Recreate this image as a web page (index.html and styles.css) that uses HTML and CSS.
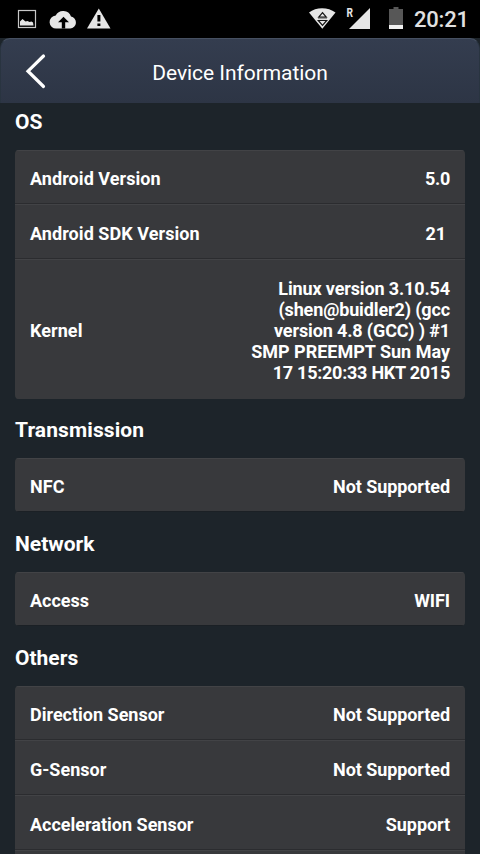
FILE: index.html
```html
<!DOCTYPE html>
<html lang="en">
<head>
<meta charset="utf-8">
<title>Device Information</title>
<link rel="stylesheet" href="styles.css">
</head>
<body>
<div class="status">
  <svg class="status-left" width="120" height="38" viewBox="0 0 120 38">
    <rect x="18.500" y="10.500" width="17" height="17" fill="none" stroke="#c8c8c8" stroke-width="1.200"/>
    <path d="M20 25.500V21.500l2.500-2.500 3 2.500 2-.5 2 1 2-.5 1.500 1 .5 3z" fill="#e6e6e6"/>
    <path d="M56.500 28.500a6.500 6.500 0 0 1-.8-13A8.300 8.300 0 0 1 71 16.600a6 6 0 0 1-.8 11.900z" fill="#e6e6e6"/>
    <path d="M63.500 16.800l5.500 5.400h-3.800v6.300h-3.400v-6.300H58z" fill="#000"/>
    <path d="M98.800 8.500L110.500 28.500H87z" fill="#e6e6e6"/>
    <path d="M97.400 15h3v6.500h-3zM97.400 23.500h3v2.500h-3z" fill="#000"/>
  </svg>
  <svg class="status-right" width="104" height="38" viewBox="0 0 104 38">
    <path d="M9 12.500C16 6.800 28 6.800 35.500 12.500L22.300 28.800z" fill="#e6e6e6"/>
    <path d="M22.500 12.600l3.800 4.600h-7.600z" fill="#e6e6e6" stroke="#111" stroke-width="1.200"/>
    <path d="M18 18.500h9" stroke="#999" stroke-width="1.200"/>
    <path d="M18.300 20.500h8.400l-4.200 4.800z" fill="#e6e6e6" stroke="#111" stroke-width="1.200"/>
    <path d="M70 8v21H49z" fill="#e6e6e6"/>
    <path d="M89 9h4.500V7h5v2h4.500v20H89z" fill="#575757"/>
    <path d="M89 25h14v4H89z" fill="#f0f0f0"/>
    <text class="roaming" x="46.500" y="17" textLength="6.500" lengthAdjust="spacingAndGlyphs">R</text>
  </svg>
  <span class="clock">20:21</span>
</div>
<header class="bar">
  <svg class="back" width="22" height="38" viewBox="0 0 22 38"><path d="M18.500 4L3 19.200l15.500 15.300" fill="none" stroke="#fff" stroke-width="3.200" stroke-linecap="round"/></svg>
  <h1>Device Information</h1>
</header>
<main>
  <h2>OS</h2>
  <section class="card">
    <div class="row"><span class="label">Android Version</span><span class="value tight">5.0</span></div>
    <div class="row"><span class="label">Android SDK Version</span><span class="value tight">21&nbsp;</span></div>
    <div class="row kernel"><span class="label">Kernel</span><span class="value"><span class="snug">Linux version 3.10.54</span><br><span class="snug">(shen@buidler2) (gcc</span><br><span class="snug">version 4.8 (GCC) ) #1</span><br><span class="line">SMP PREEMPT Sun May</span><br><span class="tight">17 15:20:33 HKT 2015</span></span></div>
  </section>
  <h2 class="wide">Transmission</h2>
  <section class="card">
    <div class="row"><span class="label">NFC</span><span class="value">Not Supported</span></div>
  </section>
  <h2>Network</h2>
  <section class="card">
    <div class="row"><span>Access</span><span class="value">WIFI</span></div>
  </section>
  <h2>Others</h2>
  <section class="card">
    <div class="row"><span>Direction Sensor</span><span class="value">Not Supported</span></div>
    <div class="row"><span>G-Sensor</span><span class="value">Not Supported</span></div>
    <div class="row"><span>Acceleration Sensor</span><span class="value">Support</span></div>
    <div class="row sliver"></div>
  </section>
</main>
</body>
</html>
```
FILE: styles.css
```css
* { box-sizing: border-box; }
body {
  margin: 0;
  height: 854px;
  overflow: hidden;
  background: #1d242a;
  color: #fff;
  font-family: Roboto, "Liberation Sans", sans-serif;
}
.status {
  height: 38px;
  background: #000;
  display: flex;
  align-items: center;
}
.status-right { margin-left: 180px; }
.roaming { font-size: 12px; font-weight: 700; fill: #e6e6e6; }
.clock {
  margin-left: 10px;
  font-size: 22px;
  font-weight: 500;
  letter-spacing: -0.2px;
  line-height: 38px;
  padding-top: 2px;
  color: #e0e0e0;
}
.bar {
  height: 65px;
  display: grid;
  grid-template-columns: 60px 1fr 60px;
  align-items: center;
  background: linear-gradient(#343d4f, #2d3545);
  border: 1px solid #293440;
  border-top-color: #465061;
  border-bottom: 0;
  border-radius: 10px 10px 0 0;
}
.back { margin-left: 24px; }
h1 {
  margin: 4px 0 0;
  font-size: 21px;
  font-weight: 400;
  line-height: 24px;
  letter-spacing: -0.05px;
  text-align: center;
}
main { padding: 0 15px; }
h2 {
  margin: 0;
  height: 60px;
  padding-top: 18px;
  font-size: 21px;
  font-weight: 700;
  line-height: 28px;
}
h2:first-child { height: 47px; padding-top: 5px; }
.wide { letter-spacing: 0.1px; }
.card {
  background: #38393c;
  border-radius: 4px;
  overflow: hidden;
}
.row {
  height: 55px;
  padding: 4px 15px 0;
  border-top: 1px solid #424346;
  border-bottom: 1px solid #2b2c2f;
  display: flex;
  align-items: center;
  justify-content: space-between;
  font-size: 18px;
  font-weight: 700;
  line-height: 21px;
}
.row:first-child { height: 54px; padding-top: 3px; }
.row:last-child { border-bottom-color: #1b2025; }
.row.kernel {
  height: 140px;
  padding-top: 3px;
  border-bottom-color: #38393c;
}
.row.sliver { height: 4px; padding: 0; border-bottom: 0; }
.label { letter-spacing: 0.06px; }
.value { text-align: right; letter-spacing: -0.08px; }
.snug { letter-spacing: -0.13px; }
.line { letter-spacing: 0; }
.tight { letter-spacing: -0.25px; }
.card:last-child { border-radius: 4px 4px 0 0; }
.card:first-of-type + h2 { height: 59px; padding-top: 17px; }
```
